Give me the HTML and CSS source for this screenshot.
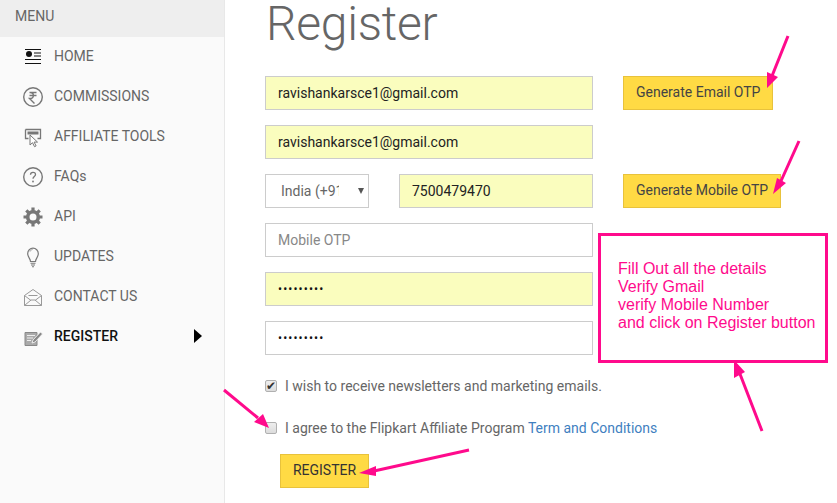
FILE: index.html
```html
<!DOCTYPE html>
<html lang="en">

<head>
    <meta charset="UTF-8">
    <meta name="viewport" content="width=device-width, initial-scale=1.0">
    <link rel="stylesheet" href="styles.css">
    <title>Register</title>
</head>

<body>
    <div class="page">
        <!-- Side menu -->
        <aside class="sidebar">
            <div class="menuTitle">MENU</div>
            <a class="menuItem">
                <svg class="menuIcon" viewBox="0 0 22 22"><circle cx="7" cy="8" r="3" fill="#111"/><path d="M3 3.500h16M12 7h7M12 10h7M3 13.500h16M3 17.500h16" stroke="#111" stroke-width="1.100" fill="none"/></svg>
                <span>HOME</span>
            </a>
            <a class="menuItem">
                <svg class="menuIcon" viewBox="0 0 22 22"><circle cx="11" cy="11" r="9.300" stroke="#777" stroke-width="1.400" fill="none"/><path d="M7.500 6.500h7M7.500 9.500h7M8 6.500c4.500 0 4.500 6 0 6h-.5l5 5" stroke="#777" stroke-width="1.400" fill="none"/></svg>
                <span>COMMISSIONS</span>
            </a>
            <a class="menuItem">
                <svg class="menuIcon" viewBox="0 0 22 22"><path d="M3.500 3.500h15v9h-3M3.500 3.500v9h3" stroke="#777" stroke-width="1.300" fill="none"/><path d="M5.500 5.500h11v3h-11z" fill="#777"/><path d="M8 9l0 10 2.500-2.300 2 4 1.600-.8-2-3.800h3.400z" fill="#fff" stroke="#777"/></svg>
                <span>AFFILIATE TOOLS</span>
            </a>
            <a class="menuItem">
                <svg class="menuIcon" viewBox="0 0 22 22"><circle cx="11" cy="11" r="9.300" stroke="#777" stroke-width="1.400" fill="none"/><path d="M8.500 8.800c0-3.300 5-3.300 5-.2 0 2-2.500 2-2.500 4.200" stroke="#777" stroke-width="1.300" fill="none"/><circle cx="11" cy="15.500" r=".9" fill="#777"/></svg>
                <span>FAQs</span>
            </a>
            <a class="menuItem">
                <svg class="menuIcon" viewBox="0 0 22 22"><circle cx="11" cy="11" r="5.300" stroke="#777" stroke-width="3.600" fill="none"/><path d="M11 1.500v19M1.500 11h19M4.300 4.300l13.400 13.400M17.700 4.300L4.300 17.700" stroke="#777" stroke-width="3.200" stroke-dasharray="3.600 11.800 3.600"/></svg>
                <span>API</span>
            </a>
            <a class="menuItem">
                <svg class="menuIcon" viewBox="0 0 22 22"><path d="M8.500 15.500c0-3-2.800-4-2.800-8a5.300 5.300 0 0 1 10.600 0c0 4-2.800 5-2.800 8z" stroke="#777" stroke-width="1.200" fill="none"/><path d="M8 5.500c.5-1.200 1.500-1.800 2.500-2" stroke="#999" fill="none"/><path d="M8.500 17.300h5M9 19h4M10 20.800h2" stroke="#777" stroke-width="1.100"/></svg>
                <span>UPDATES</span>
            </a>
            <a class="menuItem">
                <svg class="menuIcon" viewBox="0 0 22 22"><path d="M2.500 9.500L11 3.500l8.500 6v10h-17zM2.500 9.500l6.500 5M19.500 9.500l-6.500 5M2.500 19.500l6.500-5.500h4l6.500 5.500M6.500 9.500h9" stroke="#999" stroke-width="1" fill="none"/></svg>
                <span>CONTACT US</span>
            </a>
            <a class="menuItem menuActivo">
                <svg class="menuIcon" viewBox="0 0 22 22"><path d="M3 6.500h12v13H3z" fill="#aaa" stroke="#888"/><path d="M5 9.500h8M5 12h6M5 14.500h4" stroke="#eee"/><path d="M10 17l1-3 7.500-8 2 2-7.500 8z" fill="#888" stroke="#fafafa" stroke-width=".8"/></svg>
                <span>REGISTER</span>
                <i class="flechaMenu"></i>
            </a>
        </aside>

        <!-- Register form -->
        <main class="contenido">
            <h1 class="titulo">Register</h1>
            <form class="formulario">
                <div class="fila">
                    <input class="campo campoLleno" type="text" value="ravishankarsce1@gmail.com">
                    <button class="boton" type="button">Generate Email OTP</button>
                </div>
                <div class="fila">
                    <input class="campo campoLleno" type="text" value="ravishankarsce1@gmail.com">
                </div>
                <div class="fila">
                    <div class="grupoTelefono">
                        <div class="paisCaja">
                            <select class="pais"><option>India (+91)</option></select>
                        </div>
                        <input class="campo campoLleno telefono" type="text" value="7500479470">
                    </div>
                    <button class="boton" type="button">Generate Mobile OTP</button>
                </div>
                <div class="fila">
                    <input class="campo" type="text" placeholder="Mobile OTP">
                </div>
                <div class="fila">
                    <input class="campo campoLleno clave" type="password" value="ravishank">
                </div>
                <div class="fila">
                    <input class="campo clave" type="password" value="ravishank">
                </div>
                <label class="opcion opcionPrimera"><input class="casilla" type="checkbox" checked> I wish to receive newsletters and marketing emails.</label>
                <label class="opcion"><input class="casilla" type="checkbox"> <span>I agree to the Flipkart Affiliate Program <a class="enlace">Term and Conditions</a></span></label>
                <button class="boton botonRegistro" type="button">REGISTER</button>
            </form>
        </main>
    </div>

    <!-- Notes drawn over the page -->
    <div class="nota">Fill Out all the details<br>Verify Gmail<br>verify Mobile Number<br>and click on Register button</div>
    <svg class="flechas" viewBox="0 0 837 503">
        <path d="M788 36L772 76M799 141L781 181M762 431L740 374M224 390L258 418M469 450L374 471" stroke="#ff0a8c" stroke-width="3" fill="none"/>
        <path d="M767 88L767 72 778 77zM773 194L777 178 786 183zM734 360L734 378 745 372zM269 428L254 422 263 414zM359 473L376 466 376 476z" fill="#ff0a8c"/>
    </svg>
</body>

</html>
```

FILE: styles.css
```css
* {
    box-sizing: border-box;
}

html,
body {
    margin: 0;
    height: 503px;
    overflow: hidden;
    background-color: #fff;
}

body {
    position: relative;
    font-family: Roboto, "Liberation Sans", sans-serif;
    font-size: 14px;
    color: #666;
}

.page {
    display: flex;
    height: 503px;
}

.sidebar {
    width: 225px;
    flex-shrink: 0;
    background-color: #fafafa;
    border-right: 1px solid #e8e8e8;
}

.menuTitle {
    height: 37px;
    line-height: 33px;
    padding-left: 15px;
    background-color: #eee;
    color: #666;
}

.menuItem {
    display: flex;
    align-items: center;
    height: 40px;
    padding: 0 22px;
    gap: 10px;
}

.menuItem span {
    margin-bottom: 2px;
}

.menuIcon {
    width: 22px;
    height: 22px;
    flex-shrink: 0;
}

.menuActivo {
    color: #111;
    font-weight: 500;
}

.flechaMenu {
    margin-left: auto;
    margin-bottom: 2px;
    border-left: 8px solid #000;
    border-top: 7px solid transparent;
    border-bottom: 7px solid transparent;
}

.contenido {
    flex: 1;
    padding-left: 40px;
}

.titulo {
    margin: 0 0 28px 1px;
    font-size: 48px;
    line-height: 48px;
    font-weight: 300;
    letter-spacing: -.25px;
    color: #666;
}

.fila {
    display: flex;
    gap: 30px;
    height: 34px;
    margin-bottom: 15px;
}

.campo {
    width: 328px;
    height: 34px;
    padding: 0 12px;
    border: 1px solid #ccc;
    background-color: #fff;
    font-family: inherit;
    font-size: 14px;
    color: #222;
    outline: none;
}

.campo::placeholder {
    color: #888;
}

.campoLleno {
    background-color: #fafdbe;
}

.clave {
    font-size: 12px;
    letter-spacing: 1.1px;
    color: #111;
}

.grupoTelefono {
    display: flex;
    gap: 30px;
    width: 328px;
}

.paisCaja {
    position: relative;
    width: 104px;
    height: 34px;
}

.paisCaja::after {
    content: "";
    position: absolute;
    left: 93px;
    top: 14px;
    border-top: 6px solid #555;
    border-left: 3px solid transparent;
    border-right: 3px solid transparent;
}

.pais {
    appearance: none;
    width: 104px;
    height: 34px;
    padding: 0 29px 0 15px;
    border: 1px solid #ccc;
    border-radius: 0;
    background-color: #fff;
    font-family: inherit;
    font-size: 14px;
    color: #666;
}

.telefono {
    width: 194px;
}

.boton {
    height: 34px;
    padding: 0 12px 2px;
    border: 1px solid #e8c23c;
    background-color: #ffda44;
    font-family: inherit;
    font-size: 14px;
    color: #444;
}

.opcion {
    display: flex;
    align-items: center;
    gap: 8px;
    height: 20px;
    margin-bottom: 22px;
    font-size: 14px;
    color: #666;
}

.opcionPrimera {
    margin-top: 21px;
}

.casilla {
    appearance: none;
    display: flex;
    align-items: center;
    justify-content: center;
    width: 12px;
    height: 12px;
    margin: 0;
    flex-shrink: 0;
    border: 1px solid #b0b0b0;
    border-radius: 2px;
    background: linear-gradient(#eee, #dcdcdc);
}

.casilla:checked::after {
    content: "\2714";
    font-family: "DejaVu Sans", sans-serif;
    font-size: 12px;
    line-height: 10px;
    color: #333;
}

.enlace {
    color: #3f7fbf;
}

.botonRegistro {
    display: block;
    width: 89px;
    margin: -6px 0 0 15px;
    padding: 0 0 2px;
    color: #333;
}

.nota {
    position: absolute;
    left: 598px;
    top: 233px;
    width: 230px;
    height: 130px;
    padding: 24px 0 0 17px;
    border: 3px solid #ff0a8c;
    background-color: #fff;
    font-family: "Liberation Sans", sans-serif;
    font-size: 16px;
    line-height: 18px;
    color: #ff0a8c;
}

.flechas {
    position: absolute;
    left: 0;
    top: 0;
    width: 837px;
    height: 503px;
    pointer-events: none;
}
```
